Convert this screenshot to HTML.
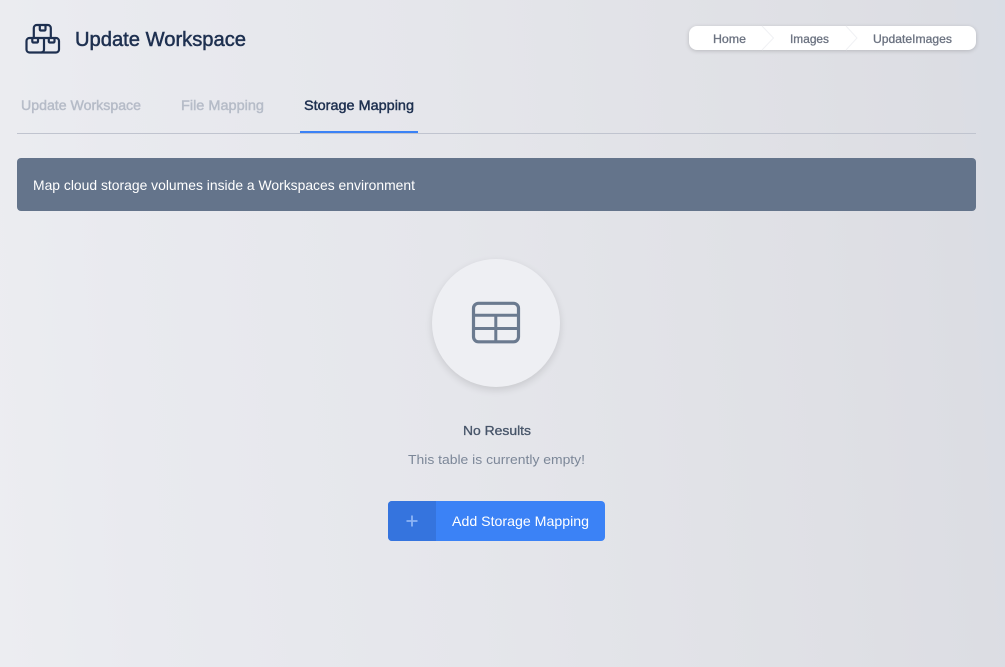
<!DOCTYPE html>
<html><head><meta charset="utf-8"><style>
html,body{margin:0;padding:0;width:1005px;height:667px;overflow:hidden}
body{position:relative;background:linear-gradient(86deg,#ecedf1 0%,#e9eaef 14%,#e5e6eb 45%,#dfe0e5 80%,#dcdde3 94%,#d9dde5 100%);font-family:"Liberation Sans",sans-serif}
.a{position:absolute}
svg{position:absolute;left:0;top:0}
text{font-family:"Liberation Sans",sans-serif}
</style></head><body>
<div class="a" style="left:689px;top:26px;width:287px;height:24px;background:#fff;border-radius:8px;box-shadow:0 1px 4px rgba(0,0,0,.18)"></div>
<div class="a" style="left:17px;top:158px;width:959px;height:53px;background:#64748b;border-radius:4px"></div>
<div class="a" style="left:432px;top:259px;width:128px;height:128px;border-radius:50%;background:#eeeff3;box-shadow:0 3px 8px rgba(0,0,0,.12)"></div>
<div class="a" style="left:388px;top:501px;width:217px;height:40px;background:#3b82f6;border-radius:4px;overflow:hidden"><div style="width:48px;height:40px;background:#3574de"></div></div>
<svg width="1005" height="667" viewBox="0 0 1005 667" fill="none">
<g stroke="#1e3050" stroke-width="2.200" stroke-linejoin="round" stroke-linecap="round">
<path d="M33.800 37V28a3 3 0 0 1 3-3H47.800a3 3 0 0 1 3 3V37"/>
<path d="M39.800 25.500V29.500a1 1 0 0 0 1 1H44.500a1 1 0 0 0 1-1V25.500"/>
<path d="M29.500 38H56a3 3 0 0 1 3 3V49.500a3 3 0 0 1-3 3H29.500a3 3 0 0 1-3-3V41a3 3 0 0 1 3-3Z"/>
<path d="M44 38.500V49.500a3 3 0 0 1-3 3"/>
<path d="M32.300 38.500V41.500a1 1 0 0 0 1 1H37a1 1 0 0 0 1-1V38.500"/>
<path d="M48.800 38.500V41.500a1 1 0 0 0 1 1H53.500a1 1 0 0 0 1-1V38.500"/>
</g>
<text x="75" y="46" font-size="20" fill="#1e3050" stroke="#1e3050" stroke-width=".5" textLength="171" lengthAdjust="spacingAndGlyphs">Update Workspace</text>
<path d="M762 26L773.500 38L762 50M846 26L857 38L846 50" stroke="#f0f1f4" stroke-width="1"/>
<g font-size="12" fill="#6b7280" stroke="#6b7280" stroke-width=".3">
<text x="713" y="43" textLength="33" lengthAdjust="spacingAndGlyphs">Home</text>
<text x="790" y="43" textLength="39" lengthAdjust="spacingAndGlyphs">Images</text>
<text x="873" y="43" textLength="79" lengthAdjust="spacingAndGlyphs">UpdateImages</text>
</g>
<g font-size="14" stroke-width=".45">
<text x="21" y="110" fill="#b6bcc8" stroke="#b6bcc8" textLength="120" lengthAdjust="spacingAndGlyphs">Update Workspace</text>
<text x="181" y="110" fill="#b6bcc8" stroke="#b6bcc8" textLength="83" lengthAdjust="spacingAndGlyphs">File Mapping</text>
<text x="304" y="110" fill="#1e3050" stroke="#1e3050" textLength="110" lengthAdjust="spacingAndGlyphs">Storage Mapping</text>
</g>
<rect x="17" y="133" width="959" height="1" fill="#c0c4cf"/>
<rect x="300" y="131" width="118" height="2" fill="#3b82f6"/>
<text x="33" y="190" font-size="14" fill="#fff" textLength="382" lengthAdjust="spacingAndGlyphs">Map cloud storage volumes inside a Workspaces environment</text>
<g stroke="#6b7a8f">
<rect x="473.500" y="303.300" width="45" height="38.500" rx="5" stroke-width="3.200"/>
<path d="M473.500 315.200H518.500M473.500 328.500H518.500M495.800 315.200V341.500" stroke-width="3"/>
</g>
<text x="463" y="435" font-size="13" fill="#475569" stroke="#475569" stroke-width=".3" textLength="68" lengthAdjust="spacingAndGlyphs">No Results</text>
<text x="408" y="464" font-size="13" fill="#7c8798" textLength="177" lengthAdjust="spacingAndGlyphs">This table is currently empty!</text>
<path d="M412 515.500V526.500M406.500 521H417.500" stroke="#8db4f5" stroke-width="1.800"/>
<text x="452" y="526" font-size="14" fill="#fff" textLength="137" lengthAdjust="spacingAndGlyphs">Add Storage Mapping</text>
</svg>
</body></html>
